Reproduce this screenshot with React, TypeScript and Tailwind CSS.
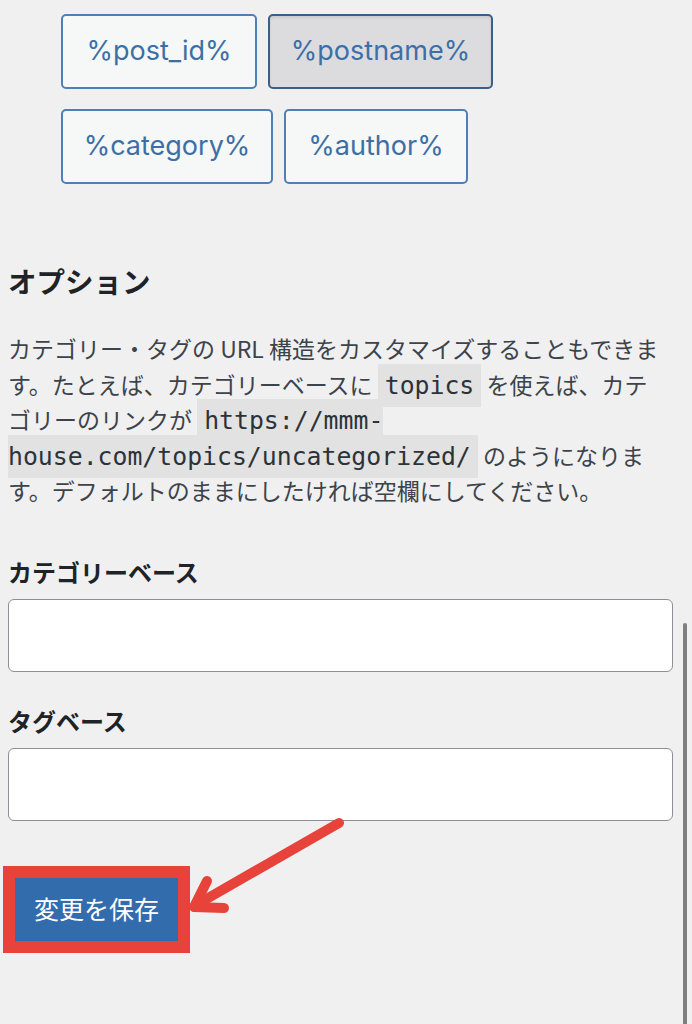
import React from "react";

const jp = { fontFamily: '"Noto Sans CJK JP", "Noto Sans", sans-serif' };
const mono = { fontFamily: '"DejaVu Sans Mono", "Liberation Mono", "Noto Sans CJK JP", monospace' };
const btnFont = { fontFamily: 'Inter, "Noto Sans", sans-serif' };

function TagButton({ label, width, pressed }: { label: string; width: string; pressed?: boolean }) {
  return (
    <div
      style={btnFont}
      className={
        "h-[75px] flex items-center justify-center rounded-[5px] border-2 text-[27px] text-[#3b6fa6] " +
        width +
        (pressed
          ? " bg-[#dcdcde] border-[#3a5f88] shadow-[inset_0_2px_3px_rgba(0,0,0,0.08)]"
          : " bg-[#f6f7f7] border-[#4f7fb4]")
      }
    >
      {label}
    </div>
  );
}

const codeCls = "bg-[#e2e2e3] px-[7px] py-[7px] text-[24.8px] leading-none text-[#2c3338]";

export default function App() {
  return (
    <div style={jp} className="relative w-full h-[1024px] overflow-hidden bg-[#f0f0f1]">
      <div className="flex flex-col gap-[20px] pt-[14px] pl-[61px]">
        <div className="flex gap-[11px]">
          <TagButton label="%post_id%" width="w-[196px]" />
          <TagButton label="%postname%" width="w-[225px]" pressed />
        </div>
        <div className="flex gap-[11px]">
          <TagButton label="%category%" width="w-[212px]" />
          <TagButton label="%author%" width="w-[184px]" />
        </div>
      </div>

      <div className="px-[8px]">
        <h2 className="mt-[79px] text-[28.5px] leading-[36px] font-bold text-[#1d2327]">オプション</h2>

        <p className="mt-[32px] text-[23px] leading-[35.5px] text-[#3c434a] whitespace-nowrap">
          カテゴリー・タグの URL 構造をカスタマイズすることもできま
          <br />
          す。たとえば、カテゴリーベースに{" "}
          <code style={mono} className={codeCls}>topics</code>{" "}
          を使えば、カテ
          <br />
          ゴリーのリンクが{" "}
          <code style={mono} className={codeCls}>
            https://mmm-
            <br />
            house.com/topics/uncategorized/
          </code>{" "}
          のようになりま
          <br />
          す。デフォルトのままにしたければ空欄にしてください。
        </p>

        <label className="block mt-[45px] text-[24px] leading-[36px] font-bold text-[#1d2327]">
          カテゴリーベース
        </label>
        <div className="mt-[9px] w-[665px] h-[73px] bg-white border-[1.5px] border-[#8c8f94] rounded-[6px]" />

        <label className="block mt-[31px] text-[24px] leading-[36px] font-bold text-[#1d2327]">
          タグベース
        </label>
        <div className="mt-[9px] w-[665px] h-[73px] bg-white border-[1.5px] border-[#8c8f94] rounded-[6px]" />
      </div>

      <div className="mt-[45px] ml-[3px] w-[187px] border-[12px] border-[#e8433b]">
        <div className="h-[63px] bg-[#336cad] flex items-center justify-center text-white text-[25px]">
          変更を保存
        </div>
      </div>

      <svg className="absolute left-0 top-0 pointer-events-none" width="692" height="1024">
        <g stroke="#e8433b" strokeWidth="10" strokeLinecap="round" strokeLinejoin="round" fill="none">
          <line x1="339" y1="823" x2="196" y2="905" />
          <polyline points="207,881 194,907 224,908" />
        </g>
      </svg>

      <div className="absolute left-[683px] top-[623px] w-[4px] h-[401px] rounded-t-full bg-[#7f7f7f]" />
    </div>
  );
}
